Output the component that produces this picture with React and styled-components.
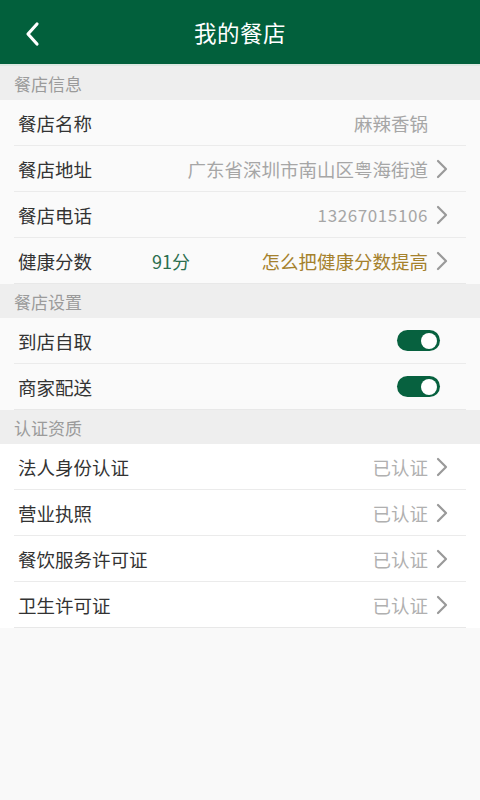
import React from "react";
import styled, { createGlobalStyle } from "styled-components";

const Global = createGlobalStyle`
  html, body { margin: 0; padding: 0; background: #f9f9f9; }
  body { font-family: "Noto Sans CJK SC", "Noto Sans", sans-serif; }
  * { box-sizing: border-box; }
`;

const Page = styled.div`
  width: 480px;
  min-height: 800px;
  background: #f9f9f9;
`;

const Header = styled.header`
  height: 66px;
  background: #02603c;
  display: flex;
  align-items: center;
  justify-content: center;
  position: relative;
  border-bottom: 2px solid #dde8e2;
`;

const Back = styled.div`
  position: absolute;
  left: 22px;
  top: 20px;
  width: 24px;
  height: 28px;
  display: flex;
`;

const Title = styled.h1`
  margin: 0;
  color: #ffffff;
  font-size: 22.5px;
  font-weight: 400;
  letter-spacing: 0.5px;
`;

const SectionHead = styled.div`
  height: 34px;
  background: #eeeeee;
  color: #9b9b9b;
  font-size: 17px;
  display: flex;
  align-items: center;
  padding-left: 14px;
`;

const Group = styled.div`
  background: ${(p) => (p.$tint ? "#fafafa" : "#ffffff")};
`;

const Row = styled.div`
  height: 46px;
  margin: 0 14px;
  border-bottom: 1px solid #ebebeb;
  display: flex;
  align-items: center;
  padding: 0 18px 0 4px;
  font-size: 18.5px;
  &:last-child { border-bottom: 1px solid #e8e8e8; }
`;

const Label = styled.span`
  color: #333333;
  flex: 0 0 auto;
`;

const Score = styled.span`
  color: #2b6e4e;
  font-size: 18px;
  margin-left: 60px;
`;

const Value = styled.span`
  margin-left: auto;
  color: ${(p) => p.$color || "#a6a6a6"};
  font-size: ${(p) => p.$size || "18.5px"};
  letter-spacing: ${(p) => p.$ls || "0"};
  white-space: nowrap;
`;

const ArrowSlot = styled.span`
  width: 12px;
  height: 20px;
  margin-left: 8px;
  display: flex;
  align-items: center;
  justify-content: center;
`;

const Toggle = styled.span`
  margin-left: auto;
  margin-right: 8px;
  width: 43px;
  height: 21px;
  border-radius: 11px;
  background: #07613f;
  position: relative;
  &::after {
    content: "";
    position: absolute;
    right: 3px;
    top: 2.5px;
    width: 16px;
    height: 16px;
    border-radius: 50%;
    background: #ffffff;
  }
`;

const Chevron = () => (
  <svg width="12" height="20" viewBox="0 0 12 20">
    <path d="M2 2 L10 10 L2 18" fill="none" stroke="#999" strokeWidth="2.2" strokeLinecap="round" strokeLinejoin="round" />
  </svg>
);

function Item({ label, value, color, arrow = true, children, size, ls }) {
  return (
    <Row>
      <Label>{label}</Label>
      {children}
      <Value $color={color} $size={size} $ls={ls}>{value}</Value>
      <ArrowSlot>{arrow && <Chevron />}</ArrowSlot>
    </Row>
  );
}

export default function App() {
  const certs = ["法人身份认证", "营业执照", "餐饮服务许可证", "卫生许可证"];
  return (
    <Page>
      <Global />
      <Header>
        <Back>
          <svg width="24" height="28" viewBox="0 0 24 28">
            <path d="M15 4 L6 14 L15 24" fill="none" stroke="#fff" strokeWidth="3.2" strokeLinecap="round" strokeLinejoin="round" />
          </svg>
        </Back>
        <Title>我的餐店</Title>
      </Header>

      <SectionHead>餐店信息</SectionHead>
      <Group $tint>
        <Item label="餐店名称" value="麻辣香锅" arrow={false} />
        <Item label="餐店地址" value="广东省深圳市南山区粤海街道" />
        <Item label="餐店电话" value="13267015106" size="17px" ls="0.6px" />
        <Item label="健康分数" value="怎么把健康分数提高" color="#a5812c">
          <Score>91分</Score>
        </Item>
      </Group>

      <SectionHead>餐店设置</SectionHead>
      <Group $tint>
        <Row>
          <Label>到店自取</Label>
          <Toggle />
        </Row>
        <Row>
          <Label>商家配送</Label>
          <Toggle />
        </Row>
      </Group>

      <SectionHead>认证资质</SectionHead>
      <Group>
        {certs.map((c) => (
          <Item key={c} label={c} value="已认证" color="#b0b0b0" />
        ))}
      </Group>
    </Page>
  );
}
